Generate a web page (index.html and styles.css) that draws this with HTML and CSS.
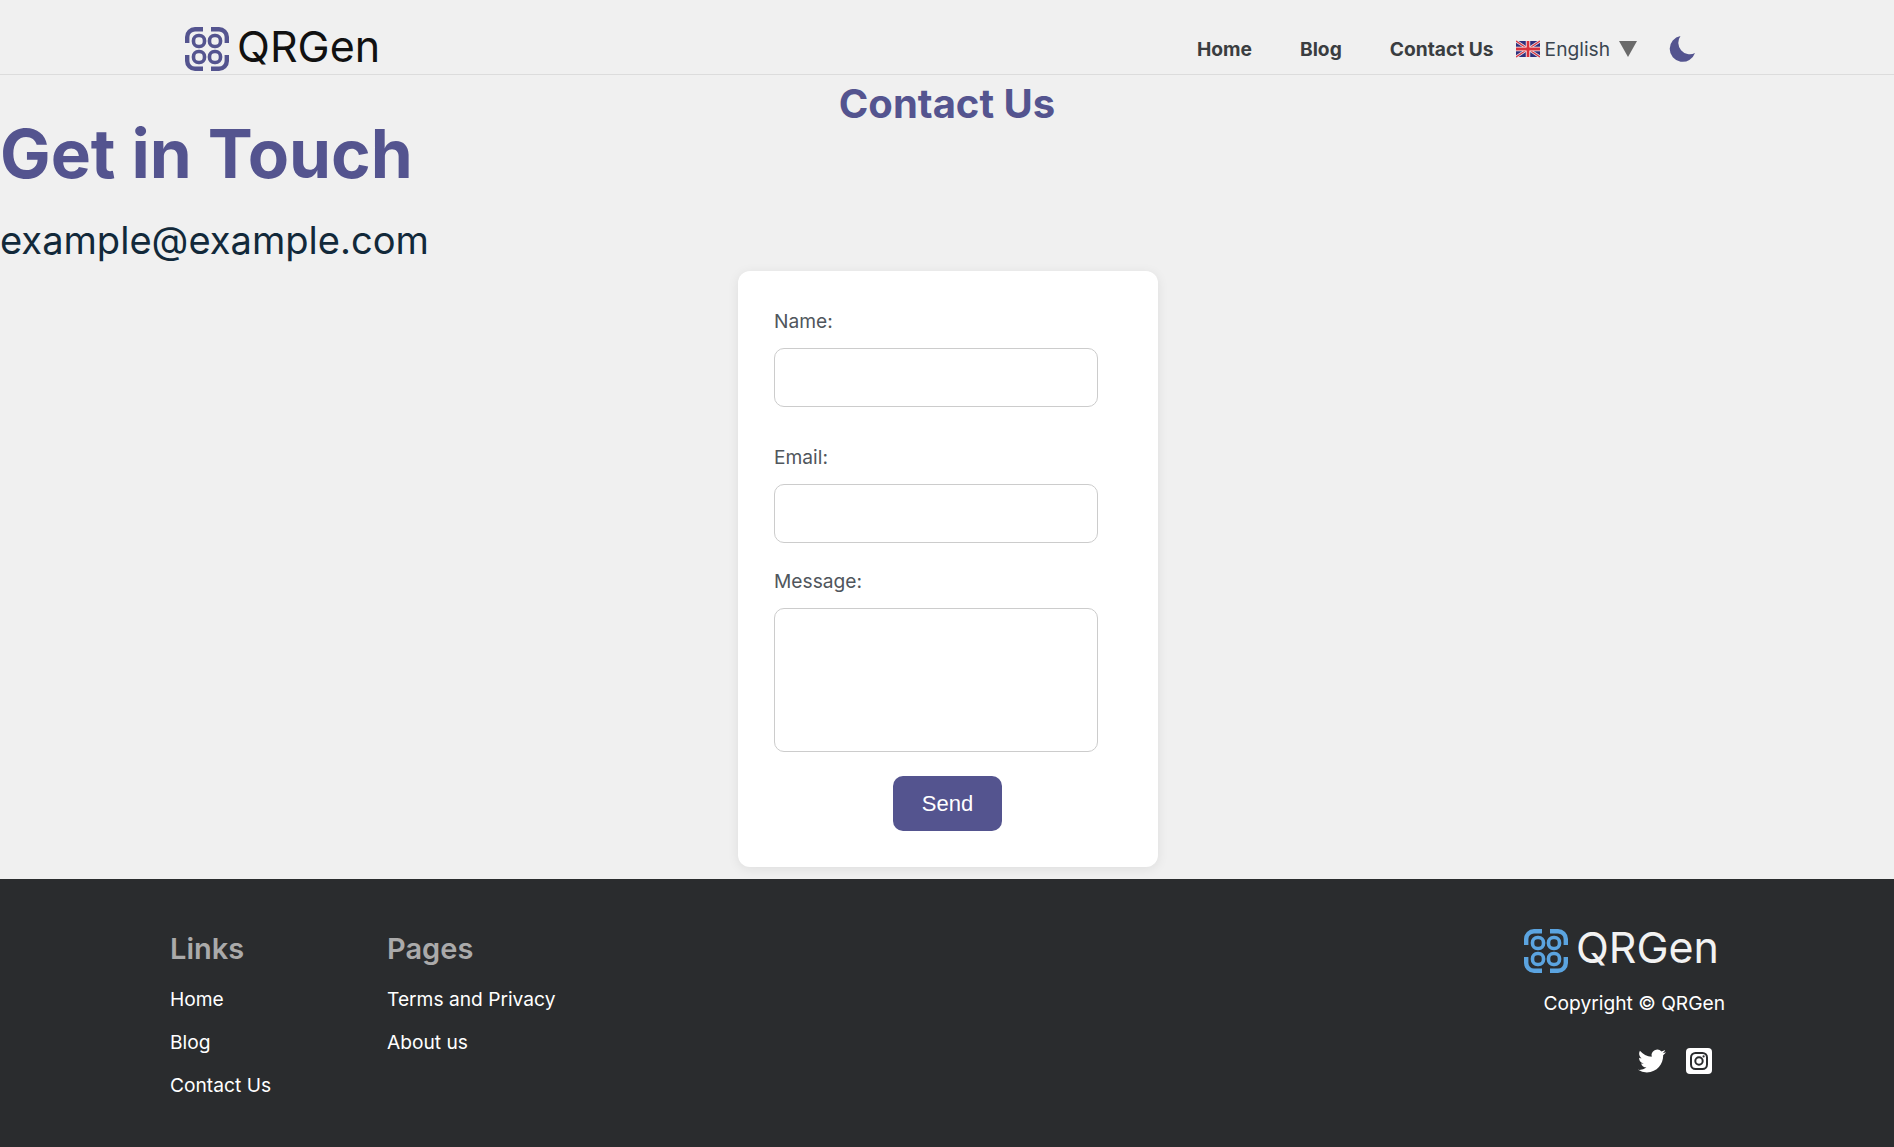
FILE: index.html
```html
<!DOCTYPE html>
<html lang="en">
<head>
    <meta charset="UTF-8">
    <meta name="viewport" content="width=device-width, initial-scale=1.0">
    <title>QRGen Contact Us</title>
    <link rel="stylesheet" href="styles.css">
</head>
<body>
    <svg class="defs" width="0" height="0">
        <defs>
            <g id="qr-logo" fill="none" stroke="currentColor">
                <g stroke-width="3.6">
                    <rect x="8.500" y="8.500" width="11" height="11" rx="5"/>
                    <rect x="24.500" y="8.500" width="11" height="11" rx="5"/>
                    <rect x="8.500" y="24.500" width="11" height="11" rx="5"/>
                    <rect x="24.500" y="24.500" width="11" height="11" rx="5"/>
                </g>
                <g stroke-width="4.400">
                    <path d="M2.200 16V10A7.800 7.800 0 0 1 10 2.200H18"/>
                    <path d="M26 2.200H34A7.800 7.800 0 0 1 41.800 10V16"/>
                    <path d="M2.200 28V34A7.800 7.800 0 0 0 10 41.800H18"/>
                    <path d="M26 41.800H34A7.800 7.800 0 0 0 41.800 34V28"/>
                </g>
            </g>
        </defs>
    </svg>

    <header class="site-header">
        <a class="logo" href="#">
            <svg class="logo-icon" viewBox="0 0 44 44"><use href="#qr-logo"/></svg>
            <span class="logo-text">QRGen</span>
        </a>
        <nav class="main-nav">
            <a href="#">Home</a>
            <a href="#">Blog</a>
            <a href="#">Contact Us</a>
        </nav>
        <div class="lang">
            <svg class="flag" viewBox="0 0 60 40">
                <rect width="60" height="40" fill="#2f2f7c"/>
                <path d="M0 0L60 40M60 0L0 40" stroke="#e8e0e8" stroke-width="7"/>
                <path d="M0 0L60 40M60 0L0 40" stroke="#d8323c" stroke-width="3"/>
                <path d="M30 0V40M0 20H60" stroke="#fff" stroke-width="11"/>
                <path d="M30 0V40M0 20H60" stroke="#d8323c" stroke-width="7"/>
            </svg>
            <span>English</span>
            <span class="caret"></span>
        </div>
        <svg class="moon" viewBox="0 0 26 26"><path d="M11.500 0A13 13 0 1 0 26 17 11.500 11.500 0 0 1 11.500 0Z"/></svg>
    </header>

    <main>
        <h2 class="page-title">Contact Us</h2>
        <h1 class="touch-title">Get in Touch</h1>
        <p class="touch-email">example@example.com</p>

        <form class="contact-card">
            <div class="field">
                <label for="name">Name:</label>
                <input id="name" type="text">
            </div>
            <div class="field">
                <label for="email">Email:</label>
                <input id="email" type="email">
            </div>
            <div class="field field-message">
                <label for="message">Message:</label>
                <textarea id="message"></textarea>
            </div>
            <button type="button" class="send">Send</button>
        </form>
    </main>

    <footer class="site-footer">
        <div class="footer-col col-links">
            <h3>Links</h3>
            <a href="#">Home</a>
            <a href="#">Blog</a>
            <a href="#">Contact Us</a>
        </div>
        <div class="footer-col">
            <h3>Pages</h3>
            <a href="#">Terms and Privacy</a>
            <a href="#">About us</a>
        </div>
        <div class="footer-brand">
            <div class="logo footer-logo">
                <svg class="logo-icon" viewBox="0 0 44 44"><use href="#qr-logo"/></svg>
                <span class="logo-text">QRGen</span>
            </div>
            <p class="copyright">Copyright © QRGen</p>
            <div class="social">
                <svg class="twitter" viewBox="0 0 24 24"><path d="M23.953 4.570a10 10 0 0 1-2.825.775 4.958 4.958 0 0 0 2.163-2.723c-.951.555-2.005.959-3.127 1.184a4.920 4.920 0 0 0-8.384 4.482C7.690 8.095 4.067 6.130 1.640 3.162a4.822 4.822 0 0 0-.666 2.475c0 1.710.870 3.213 2.188 4.096a4.904 4.904 0 0 1-2.228-.616v.060a4.923 4.923 0 0 0 3.946 4.827 4.996 4.996 0 0 1-2.212.085 4.936 4.936 0 0 0 4.604 3.417 9.867 9.867 0 0 1-6.102 2.105c-.390 0-.779-.023-1.170-.067a13.995 13.995 0 0 0 7.557 2.209c9.053 0 13.998-7.496 13.998-13.985 0-.210 0-.420-.015-.630A9.935 9.935 0 0 0 24 4.590z"/></svg>
                <svg class="instagram" viewBox="0 0 26 26">
                    <rect width="26" height="26" rx="4" fill="#fff"/>
                    <rect x="5" y="5" width="16" height="16" rx="4.500" fill="none" stroke="#2a2c2e" stroke-width="2"/>
                    <circle cx="13" cy="13" r="3.700" fill="none" stroke="#2a2c2e" stroke-width="2"/>
                    <circle cx="17.600" cy="8.400" r="1.100" fill="#2a2c2e"/>
                </svg>
            </div>
        </div>
    </footer>
</body>
</html>
```

FILE: styles.css
```css
* {
    box-sizing: border-box;
}

body {
    margin: 0;
    background-color: #f0f0f0;
    color: #333;
    font-family: Inter, "Liberation Sans", sans-serif;
}

a {
    color: inherit;
    text-decoration: none;
}

.defs {
    display: block;
    height: 0;
}

.site-header {
    display: flex;
    align-items: center;
    height: 75px;
    padding: 24px 0 0 185px;
    border-bottom: 1px solid #dcdcdc;
}

.logo {
    display: flex;
    align-items: center;
    color: #111;
}

.logo-icon {
    width: 44px;
    height: 44px;
    color: #54548f;
}

.logo-text {
    margin-left: 8px;
    margin-top: -7px;
    font-size: 43px;
    line-height: 44px;
}

.main-nav {
    display: flex;
    gap: 48px;
    margin-left: auto;
    font-size: 19.200px;
    font-weight: 700;
    color: #3a3d40;
}

.lang {
    display: flex;
    align-items: center;
    margin-left: 22px;
    font-size: 19.200px;
    color: #3a4650;
}

.flag {
    width: 24px;
    height: 18px;
    margin-right: 5px;
}

.caret {
    width: 0;
    height: 0;
    margin-left: 9px;
    border-left: 9px solid transparent;
    border-right: 9px solid transparent;
    border-top: 16px solid #6a6a6a;
}

.moon {
    width: 26px;
    height: 26px;
    margin: 0 199px 0 32px;
    fill: #54548f;
}

main {
    height: 804px;
    padding-top: 5px;
}

.page-title {
    margin: 0;
    text-align: center;
    font-size: 40px;
    line-height: 47px;
    font-weight: 700;
    color: #54548f;
}

.touch-title {
    margin: 1px 0 0;
    font-size: 67.500px;
    line-height: 52px;
    font-weight: 700;
    color: #54548f;
}

.touch-email {
    margin: 37px 0 0;
    font-size: 38.100px;
    line-height: 46px;
    color: #12293a;
}

.contact-card {
    width: 420px;
    height: 596px;
    margin: 8px 0 0 738px;
    padding: 39px 60px 0 36px;
    background-color: #fff;
    border-radius: 12px;
    box-shadow: 0 2px 12px rgba(0, 0, 0, .08);
}

.field {
    display: flex;
    flex-direction: column;
    margin-bottom: 39px;
}

.field-message {
    margin-top: -12px;
    margin-bottom: 24px;
}

.field label {
    margin-bottom: 15px;
    font-size: 19.200px;
    line-height: 23px;
    color: #50565c;
}

.field input,
.field textarea {
    display: block;
    width: 324px;
    height: 59px;
    border: 1px solid #ccc;
    border-radius: 10px;
    background-color: #fff;
    outline: none;
    resize: none;
}

.field textarea {
    height: 144px;
}

.send {
    display: block;
    width: 109px;
    height: 55px;
    margin-left: 119px;
    border: none;
    border-radius: 10px;
    background-color: #54548f;
    color: #fff;
    font-family: "Liberation Sans", Arial, sans-serif;
    font-size: 22px;
    cursor: pointer;
}

.site-footer {
    display: flex;
    height: 268px;
    padding: 53px 0 0 170px;
    background-color: #2a2c2e;
    color: #fff;
}

.footer-col {
    display: flex;
    flex-direction: column;
    align-items: flex-start;
    font-size: 19.200px;
}

.col-links {
    width: 217px;
}

.footer-col h3 {
    margin: 0 0 22px;
    font-size: 29px;
    line-height: 33px;
    font-weight: 600;
    color: #aaa;
}

.footer-col a {
    height: 43px;
    line-height: 24px;
}

.footer-brand {
    display: flex;
    flex-direction: column;
    align-items: flex-end;
    margin-left: auto;
    padding-right: 169px;
}

.footer-logo {
    align-self: flex-start;
    margin-top: -3px;
    padding-right: 6px;
    color: #f2f2f2;
}

.footer-logo .logo-icon {
    color: #5ba4e0;
}

.footer-logo .logo-text {
    margin-top: -9px;
}

.copyright {
    margin: 18px 0 0;
    font-size: 19.200px;
    line-height: 24px;
}

.social {
    display: flex;
    align-items: center;
    gap: 20px;
    margin-top: 32px;
    padding-right: 13px;
}

.twitter {
    width: 28px;
    height: 28px;
    fill: #fff;
}

.instagram {
    width: 26px;
    height: 26px;
}
```
